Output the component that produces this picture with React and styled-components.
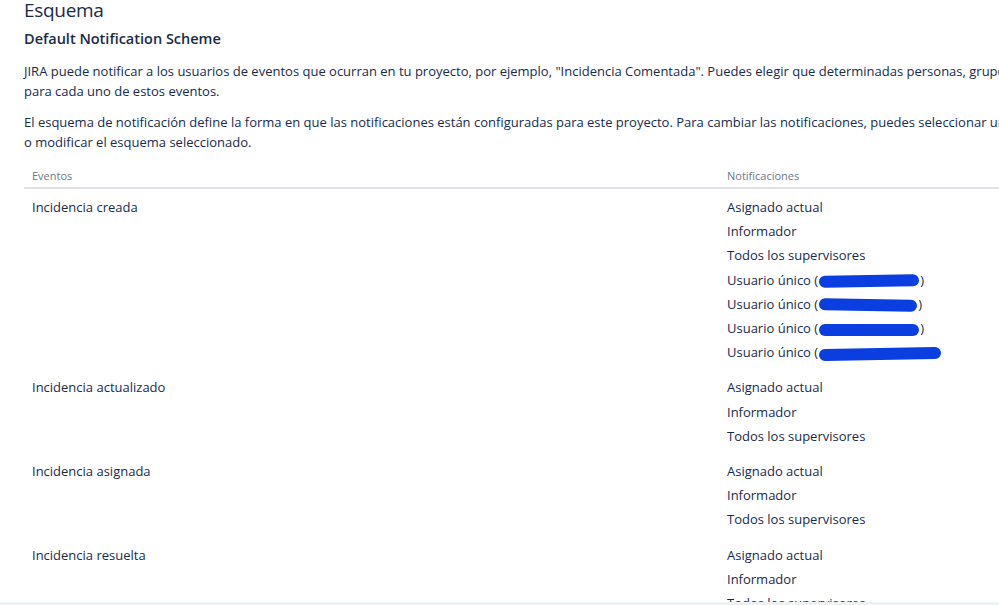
import React from "react";
import styled, { createGlobalStyle } from "styled-components";

const GlobalStyle = createGlobalStyle`
  html, body {
    margin: 0;
    padding: 0;
    background: #ffffff;
    overflow: hidden;
  }
  body {
    font-family: "Open Sans", "Noto Sans", sans-serif;
    color: #172b4d;
  }
`;

const Page = styled.div`
  width: 1400px;
  padding: 0 0 0 24px;
  margin-top: -4px;
`;

const Title = styled.h1`
  margin: 0;
  font-size: 19px;
  letter-spacing: -0.3px;
  font-weight: 400;
  line-height: 28px;
`;

const Subtitle = styled.h2`
  margin: 5px 0 0;
  font-size: 14.5px;
  font-weight: 600;
  line-height: 20px;
`;

const Text = styled.p`
  margin: ${(p) => (p.$first ? "12px" : "11px")} 0 0;
  font-size: 13px;
  line-height: 20px;
  white-space: nowrap;
`;

const Table = styled.table`
  margin-top: 11px;
  width: 100%;
  border-collapse: collapse;
`;

const HeadCell = styled.th`
  text-align: left;
  font-size: 11px;
  font-weight: 400;
  color: #6b778c;
  padding: 5px 8px 4px;
  border-bottom: 2px solid #dfe1e6;
  width: ${(p) => p.$width || "auto"};
`;

const Cell = styled.td`
  vertical-align: top;
  padding: 6px 8px 5px;
  font-size: 13px;
  line-height: 24.2px;
`;

const List = styled.ul`
  list-style: none;
  margin: 0;
  padding: 0;
`;

const Scribble = styled.span`
  display: inline-block;
  vertical-align: middle;
  width: ${(p) => p.$w}px;
  height: 12px;
  margin: 0 1px;
  background: #0a3ee0;
  border-radius: 6px;
  transform: rotate(${(p) => p.$r || 0}deg);
`;

const BottomBar = styled.div`
  position: fixed;
  left: 0;
  right: 0;
  bottom: 0;
  height: 3px;
  background: #eef0f2;
`;

const base = ["Asignado actual", "Informador", "Todos los supervisores"];

const rows = [
  {
    event: "Incidencia creada",
    items: [
      ...base,
      { user: 100, close: true, r: -1 },
      { user: 98, close: true, r: 1 },
      { user: 100, close: true, r: 0 },
      { user: 122, close: false, r: -1 },
    ],
  },
  { event: "Incidencia actualizado", items: base },
  { event: "Incidencia asignada", items: base },
  { event: "Incidencia resuelta", items: base },
];

const Notification = ({ item }) => {
  if (typeof item === "string") return <li>{item}</li>;
  return (
    <li>
      Usuario único (<Scribble $w={item.user} $r={item.r} />
      {item.close ? ")" : ""}
    </li>
  );
};

const App = () => {
  return (
    <>
      <GlobalStyle />
      <Page>
        <Title>Esquema</Title>
        <Subtitle>Default Notification Scheme</Subtitle>
        <Text $first>
          JIRA puede notificar a los usuarios de eventos que ocurran en tu
          proyecto, por ejemplo, "Incidencia Comentada". Puedes elegir que
          determinadas personas, grupos o roles reciban notificaciones
          <br />
          para cada uno de estos eventos.
        </Text>
        <Text>
          El esquema de notificación define la forma en que las notificaciones
          están configuradas para este proyecto. Para cambiar las
          notificaciones, puedes seleccionar un esquema diferente
          <br />o modificar el esquema seleccionado.
        </Text>
        <Table>
          <thead>
            <tr>
              <HeadCell $width="679px">Eventos</HeadCell>
              <HeadCell>Notificaciones</HeadCell>
            </tr>
          </thead>
          <tbody>
            {rows.map((row) => (
              <tr key={row.event}>
                <Cell>{row.event}</Cell>
                <Cell>
                  <List>
                    {row.items.map((item, index) => (
                      <Notification key={index} item={item} />
                    ))}
                  </List>
                </Cell>
              </tr>
            ))}
          </tbody>
        </Table>
      </Page>
      <BottomBar />
    </>
  );
};

export default App;
